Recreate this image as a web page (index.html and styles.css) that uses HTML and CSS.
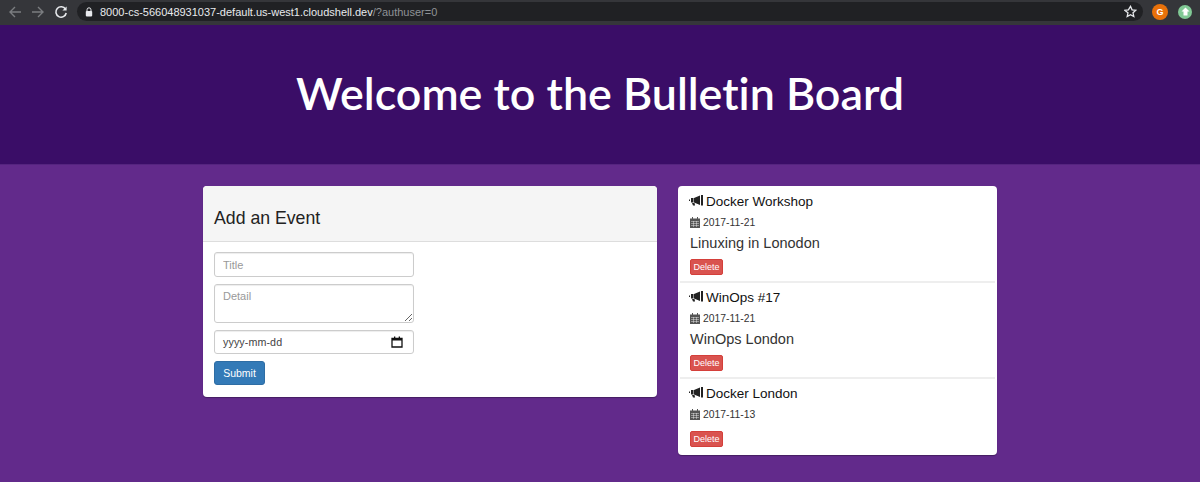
FILE: index.html

```html
<!DOCTYPE html>
<html>
	<head>
		<meta charset="utf-8">
		<title>Bulletin Board</title>
		<link rel="stylesheet" href="styles.css">
	</head>
	<body>
		<div class="toolbar">
			<svg class="nav-icon" width="14" height="14" viewBox="0 0 14 14"><path d="M13 7H2M7 2L2 7l5 5" fill="none" stroke="#7b7d80" stroke-width="1.4"/></svg>
			<svg class="nav-icon" width="14" height="14" viewBox="0 0 14 14"><path d="M1 7h11M7 2l5 5-5 5" fill="none" stroke="#7b7d80" stroke-width="1.4"/></svg>
			<svg class="nav-icon" width="14" height="14" viewBox="0 0 14 14"><path d="M11.5 4.2A5.2 5.2 0 1 0 12.2 8" fill="none" stroke="#e8eaed" stroke-width="1.6"/><path d="M12.6 1.4v4.2H8.4z" fill="#e8eaed"/></svg>
			<div class="address">
				<svg width="8" height="10" viewBox="0 0 8 10"><path d="M2 4V2.8a2 2 0 0 1 4 0V4" fill="none" stroke="#e8eaed"/><rect x="0.8" y="4" width="6.4" height="5.4" rx="0.8" fill="#e8eaed"/></svg>
				<span class="url">8000-cs-566048931037-default.us-west1.cloudshell.dev<span class="url-rest">/?authuser=0</span></span>
				<svg class="star" width="13" height="13" viewBox="0 0 24 24"><path d="M12 2.5l2.9 6.4 7 .8-5.2 4.7 1.4 6.9-6.1-3.5-6.1 3.5 1.4-6.9L1.100 9.700l7-.8z" fill="none" stroke="#e8eaed" stroke-width="2.4"/></svg>
			</div>
			<span class="avatar">G</span>
			<span class="ext"><svg width="9" height="9" viewBox="0 0 9 9"><path d="M4.500 0.500L8.500 4.500H6.500V8.500H2.500V4.500H0.500z" fill="#fff"/></svg></span>
		</div>

		<div class="jumbotron">
			<h1>Welcome to the Bulletin Board</h1>
		</div>

		<div class="container">
			<div class="panel add-panel">
				<div class="panel-heading">
					<h3>Add an Event</h3>
				</div>
				<div class="panel-body">
					<input class="form-control" type="text" placeholder="Title">
					<textarea class="form-control detail" placeholder="Detail"></textarea>
					<div class="form-control date">
						<span>yyyy-mm-dd</span>
						<svg width="12" height="12" viewBox="0 0 12 12"><path d="M1 2.500h10v8.500H1z" fill="none" stroke="#111" stroke-width="1.300"/><path d="M1 2h10v2.500H1zM3 0.500h1.300V2H3zM7.700 0.500H9V2H7.700z" fill="#111"/></svg>
					</div>
					<button class="btn-submit">Submit</button>
				</div>
			</div>

			<div class="panel list-panel">
				<div class="event">
					<h4><svg class="bullhorn" width="15" height="12" viewBox="0 0 15 12"><path d="M0 4.500h1v1.500H0zM2 3h2.500v4.500H2zM5 3l6-2.500v9.500L5 7.500zM3 8h2.500l.6 2.500H4zM12 0h2v10.500h-2z" fill="#222"/></svg>Docker Workshop</h4>
					<div class="date-line"><svg class="cal" width="10" height="11" viewBox="0 0 10 11"><path d="M0 1.500h2V0h1v1.500h4V0h1v1.500h2V11H0z" fill="#555"/><path d="M1 4.500h8M1 6.500h8M1 8.500h8M3.500 4v6M6.500 4v6" stroke="#fff" stroke-width=".4"/></svg>2017-11-21</div>
					<p>Linuxing in Lonodon</p>
					<button class="btn-delete">Delete</button>
				</div>
				<div class="event">
					<h4><svg class="bullhorn" width="15" height="12" viewBox="0 0 15 12"><path d="M0 4.500h1v1.500H0zM2 3h2.500v4.500H2zM5 3l6-2.500v9.500L5 7.500zM3 8h2.500l.6 2.500H4zM12 0h2v10.500h-2z" fill="#222"/></svg>WinOps #17</h4>
					<div class="date-line"><svg class="cal" width="10" height="11" viewBox="0 0 10 11"><path d="M0 1.500h2V0h1v1.500h4V0h1v1.500h2V11H0z" fill="#555"/><path d="M1 4.500h8M1 6.500h8M1 8.500h8M3.500 4v6M6.500 4v6" stroke="#fff" stroke-width=".4"/></svg>2017-11-21</div>
					<p>WinOps London</p>
					<button class="btn-delete">Delete</button>
				</div>
				<div class="event">
					<h4><svg class="bullhorn" width="15" height="12" viewBox="0 0 15 12"><path d="M0 4.500h1v1.500H0zM2 3h2.500v4.500H2zM5 3l6-2.500v9.500L5 7.500zM3 8h2.500l.6 2.500H4zM12 0h2v10.500h-2z" fill="#222"/></svg>Docker London</h4>
					<div class="date-line"><svg class="cal" width="10" height="11" viewBox="0 0 10 11"><path d="M0 1.500h2V0h1v1.500h4V0h1v1.500h2V11H0z" fill="#555"/><path d="M1 4.500h8M1 6.500h8M1 8.500h8M3.500 4v6M6.500 4v6" stroke="#fff" stroke-width=".4"/></svg>2017-11-13</div>
					<p class="empty"></p>
					<button class="btn-delete">Delete</button>
				</div>
			</div>
		</div>
	</body>
</html>
```

FILE: styles.css

```css
*{
	box-sizing: border-box;
}
html, body{
	height: 100%;
}
body{
	margin: 0;
	background: #622a8b;
	font-family: "Liberation Sans", Arial, sans-serif;
	color: #333;
	overflow: hidden;
}
.toolbar{
	height: 25px;
	background: #35363a;
	display: flex;
	align-items: center;
	padding: 0 8px 2px 8px;
	gap: 9px;
}
.address{
	flex: 1;
	height: 19px;
	background: #202124;
	border-radius: 10px;
	display: flex;
	align-items: center;
	padding: 0 6px 0 8px;
	gap: 7px;
}
.url{
	flex: 1;
	font-size: 11px;
	color: #e8eaed;
}
.url-rest{
	color: #8f9296;
}
.avatar{
	width: 16px;
	height: 16px;
	border-radius: 50%;
	background: #e8710a;
	color: #fff;
	font-size: 9px;
	font-weight: bold;
	display: flex;
	align-items: center;
	justify-content: center;
}
.ext{
	width: 14px;
	height: 14px;
	margin-left: 1px;
	border-radius: 50%;
	background: #81c995;
	display: flex;
	align-items: center;
	justify-content: center;
}
.jumbotron{
	height: 140px;
	padding-bottom: 3px;
	background: #3a0d67;
	border-bottom: 1px solid #55247f;
	display: flex;
	align-items: center;
	justify-content: center;
}
.jumbotron h1{
	margin: 0;
	font-family: Lato, sans-serif;
	font-size: 44.8px;
	font-weight: 600;
	font-variant-ligatures: none;
	color: #fff;
}
.container{
	display: flex;
	align-items: flex-start;
	gap: 21px;
	padding: 21px 0 0 203px;
}
.panel{
	background: #fff;
	border-radius: 4px;
	box-shadow: 0 1px 1px rgba(0,0,0,.3);
	overflow: hidden;
}
.add-panel{
	width: 454px;
	height: 211px;
}
.list-panel{
	width: 319px;
	padding-top: 1px;
}
.panel-heading{
	height: 56px;
	background: #f5f5f5;
	border-bottom: 1px solid #ddd;
	padding: 22px 11px 0;
}
.panel-heading h3{
	margin: 0;
	font-size: 17.7px;
	font-weight: normal;
	line-height: 20px;
	color: #222;
}
.panel-body{
	padding: 10px 11px;
	display: flex;
	flex-direction: column;
	align-items: flex-start;
	gap: 7px;
}
.form-control{
	display: block;
	width: 200px;
	height: 25px;
	margin: 0;
	padding: 0 8px;
	border: 1px solid #ccc;
	border-radius: 3px;
	background: #fff;
	box-shadow: inset 0 1px 1px rgba(0,0,0,.075);
	font-family: "Liberation Sans", Arial, sans-serif;
	font-size: 11px;
	color: #555;
	outline: none;
}
.form-control::placeholder{
	color: #999;
	opacity: 1;
}
.detail{
	height: 39px;
	padding-top: 5px;
}
.date{
	height: 24px;
	display: flex;
	align-items: center;
	justify-content: space-between;
	padding-right: 10px;
	font-size: 10.7px;
	letter-spacing: .1px;
	color: #444;
}
.btn-submit{
	width: 51px;
	height: 24px;
	padding: 0;
	border: 1px solid #2e6da4;
	border-radius: 3px;
	background: #337ab7;
	color: #fff;
	font-family: "Liberation Sans", Arial, sans-serif;
	font-size: 10.5px;
}
.event{
	margin: 0 2px;
	padding: 6px 10px 8px;
	border-bottom: 2px solid #eee;
	height: 96px;
}
.event:last-child{
	border-bottom: 0;
	height: auto;
}
.event h4{
	margin: 0;
	height: 16px;
	display: flex;
	align-items: center;
	font-size: 13.5px;
	font-weight: normal;
	color: #111;
}
.bullhorn{
	margin-right: 2px;
	margin-left: -1px;
}
.date-line{
	margin-top: 6px;
	height: 14px;
	display: flex;
	align-items: center;
	font-size: 10.4px;
	color: #333;
}
.cal{
	margin-right: 3px;
}
.event p{
	margin: 5px 0 0;
	height: 18px;
	line-height: 18px;
	font-size: 14.5px;
	color: #333;
}
.event p.empty{
	margin: 0;
	height: 3px;
}
.btn-delete{
	display: block;
	margin-top: 7px;
	width: 33px;
	height: 16px;
	padding: 0;
	border: 1px solid #d43f3a;
	border-radius: 2px;
	background: #d9534f;
	color: #fff;
	font-family: "Liberation Sans", Arial, sans-serif;
	font-size: 9px;
}
```
